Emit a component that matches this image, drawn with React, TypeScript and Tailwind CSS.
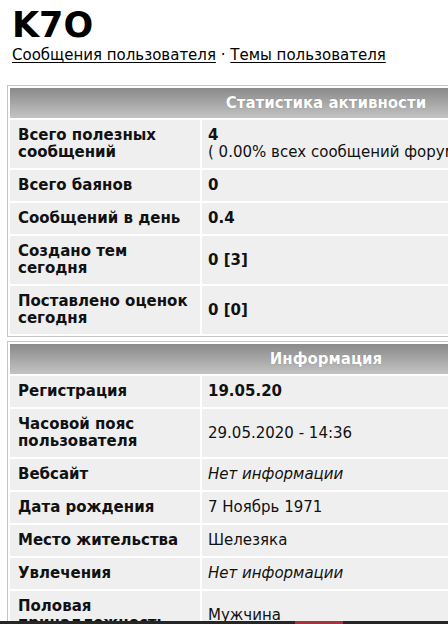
import type { ReactNode } from 'react';

type Row = {
  label: ReactNode;
  value: ReactNode;
};

const activity: Row[] = [
  {
    label: 'Всего полезных сообщений',
    value: (
      <>
        <b>4</b>
        <br />
        <span className="whitespace-nowrap">( 0.00% всех сообщений форума )</span>
      </>
    ),
  },
  { label: 'Всего баянов', value: <b>0</b> },
  { label: 'Сообщений в день', value: <b>0.4</b> },
  { label: 'Создано тем сегодня', value: <b>0 [3]</b> },
  { label: 'Поставлено оценок сегодня', value: <b>0 [0]</b> },
];

const info: Row[] = [
  { label: 'Регистрация', value: <b>19.05.20</b> },
  { label: 'Часовой пояс пользователя', value: '29.05.2020 - 14:36' },
  { label: 'Вебсайт', value: <i>Нет информации</i> },
  { label: 'Дата рождения', value: '7 Ноябрь 1971' },
  { label: 'Место жительства', value: 'Шелезяка' },
  { label: 'Увлечения', value: <i>Нет информации</i> },
  { label: 'Половая принадлежность', value: 'Мужчина' },
];

function ProfileTable({ title, rows, className }: { title: string; rows: Row[]; className?: string }) {
  return (
    <table
      className={`ml-[7px] w-[638px] border border-[#c6c6c6] border-separate border-spacing-[2px] text-[15px] leading-[17px] text-[#111] ${className ?? ''}`}
    >
      <tbody>
        <tr>
          <th
            colSpan={2}
            className="h-[30px] bg-gradient-to-b from-[#8a8a8a] to-[#c4c4c4] text-center align-middle font-bold text-white [text-shadow:0_0_1px_rgba(0,0,0,0.25)]"
          >
            {title}
          </th>
        </tr>
        {rows.map((row, i) => (
          <tr key={i}>
            <td className="w-[190px] bg-[#efefef] px-2 py-[7px] align-middle font-bold">{row.label}</td>
            <td className="bg-[#efefef] py-[7px] pl-[6px] pr-2 align-middle">{row.value}</td>
          </tr>
        ))}
      </tbody>
    </table>
  );
}

export default function App() {
  return (
    <div className="h-[624px] w-[448px] overflow-hidden bg-white font-['DejaVu_Sans',Verdana,sans-serif] text-[#111]">
      <div className="pl-3">
        <h1 className="mt-[6px] text-[35px] font-bold leading-[38px] text-black">K7O</h1>
        <div className="mt-[3px] whitespace-nowrap text-[15px] leading-[17px] text-black">
          <a href="#" className="underline underline-offset-2">
            Сообщения пользователя
          </a>
          {' · '}
          <a href="#" className="underline underline-offset-2">
            Темы пользователя
          </a>
        </div>
      </div>

      <ProfileTable title="Статистика активности" rows={activity} className="mt-[21px]" />
      <ProfileTable title="Информация" rows={info} className="mt-[4px]" />

      <div className="fixed bottom-0 left-0 flex h-[3px] w-[448px] bg-[#262626]">
        <div className="ml-[295px] w-[48px] bg-[#a3343b]" />
      </div>
    </div>
  );
}
